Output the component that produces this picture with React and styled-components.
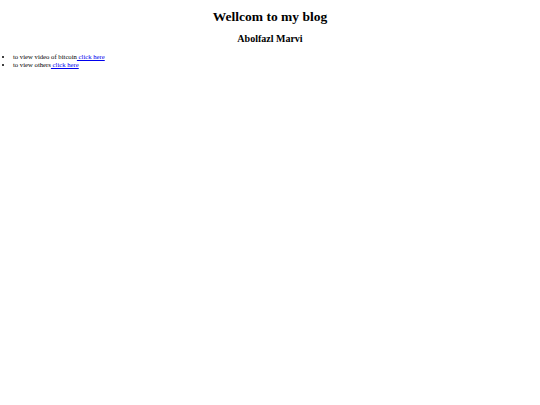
import React from "react";
import styled, { createGlobalStyle } from "styled-components";

const Global = createGlobalStyle`
  html, body { margin: 0; padding: 0; background: #fff; }
  body { font-family: "Liberation Serif", "Times New Roman", serif; color: #000; }
`;

const Page = styled.div`
  padding: 3px;
`;

const Title = styled.h1`
  font-size: 13.5px;
  font-weight: bold;
  text-align: center;
  margin: 6px 0 9px;
  line-height: 15px;
`;

const Subtitle = styled.h2`
  font-size: 10px;
  font-weight: bold;
  text-align: center;
  margin: 0 0 8px;
  line-height: 12px;
`;

const List = styled.ul`
  margin: 0;
  padding-left: 10px;
  font-size: 6.7px;
  line-height: 7.5px;
`;

const Item = styled.li``;

const Link = styled.a`
  color: #0000ee;
  text-decoration: underline;
`;

export default function App() {
  return (
    <Page>
      <Global />
      <Title>Wellcom to my blog</Title>
      <Subtitle>Abolfazl Marvi</Subtitle>
      <List>
        <Item>
          to view video of bitcoin<Link href="#"> click here</Link>
        </Item>
        <Item>
          to view others<Link href="#"> click here</Link>
        </Item>
      </List>
    </Page>
  );
}
